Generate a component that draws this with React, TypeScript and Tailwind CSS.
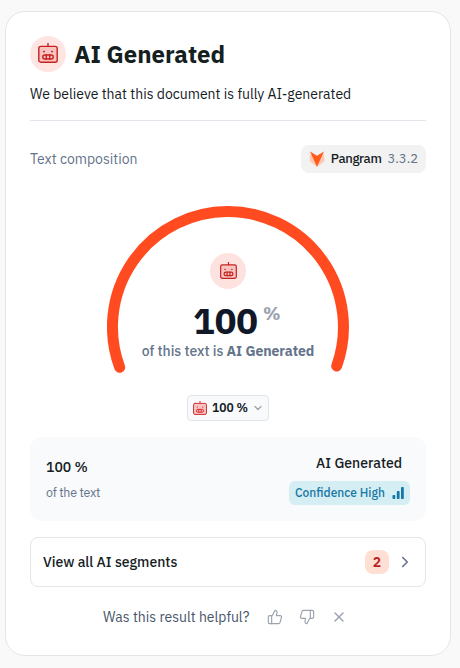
import React from 'react';
import { ChevronDown, ChevronRight, ThumbsDown, ThumbsUp, X } from 'lucide-react';

function RobotIcon({ className }: { className?: string }) {
  return (
    <svg
      viewBox="0 0 20 20"
      fill="none"
      stroke="currentColor"
      strokeWidth="1.4"
      strokeLinecap="round"
      strokeLinejoin="round"
      className={className}
    >
      <path d="M10 0.6V3.4" />
      <rect x="0.8" y="3.4" width="18.4" height="15.8" rx="2" fill="#f8c3c1" />
      <rect x="4.8" y="12" width="10.4" height="4" rx="2" />
      <path d="M8.3 12v4M11.7 12v4" />
      <path d="M5.8 8.6h.4M13.8 8.6h.4" strokeWidth="1.6" />
    </svg>
  );
}

function PangramLogo() {
  return (
    <svg viewBox="0 0 16 16" className="h-4 w-4">
      <path d="M1 3L.6 10.2L8 16L15.4 10.2L15 3L8 6Z" fill="#ffc9b5" />
      <path d="M1 .4L8 4.8L15 .4L8 15.8Z" fill="#ff5c1c" />
    </svg>
  );
}

function Gauge() {
  return (
    <div className="relative mx-auto h-[168px] w-[242px]">
      <svg viewBox="0 0 242 168" className="h-full w-full" fill="none">
        <path
          d="M12.7 161.3A115.5 115.5 0 1 1 229.7 160"
          stroke="#ff4b1f"
          strokeWidth="11"
          strokeLinecap="round"
        />
      </svg>
      <div className="absolute inset-0 flex flex-col items-center pt-[47px]">
        <div className="flex h-9 w-9 items-center justify-center rounded-full bg-[#fee2df]">
          <RobotIcon className="mb-px h-[17px] w-[17px] text-[#c5221f]" />
        </div>
        <div className="mt-3 ml-[17px] flex h-10 items-start gap-[5px]">
          <span className="text-[36px] leading-10 font-bold text-[#111827]">100</span>
          <span className="pt-[3px] text-lg leading-5 font-bold tracking-[-0.5px] text-[#9ca3af]">%</span>
        </div>
        <p className="text-sm leading-5 font-medium tracking-[-0.04px] whitespace-nowrap text-[#64748b]">
          of this text is <span className="font-bold">AI Generated</span>
        </p>
      </div>
    </div>
  );
}

export default function App() {
  return (
    <div className="h-[668px] w-[460px] bg-[#f9f9f9] pt-[11px] pl-[5px] font-['IBM_Plex_Sans',Roboto,sans-serif] text-[#14201e]">
      <div className="h-[645px] w-[446px] rounded-[20px] border border-[#e5e5e5] bg-white p-6">
        <div className="flex h-9 items-center gap-2">
          <div className="flex h-9 w-9 items-center justify-center rounded-full bg-[#fee5e2]">
            <RobotIcon className="mb-0.5 h-5 w-5 text-[#c5221f]" />
          </div>
          <h1 className="text-2xl font-bold">AI Generated</h1>
        </div>
        <p className="mt-3 text-sm leading-5">
          We believe that this document is fully AI-generated
        </p>

        <div className="mt-4 border-t border-[#e2e4ec]" />

        <div className="mt-6 flex h-7 items-center justify-between">
          <span className="text-sm text-[#64748b]">Text composition</span>
          <div className="flex h-7 items-center rounded-lg bg-[#f2f2f2] px-2">
            <PangramLogo />
            <span className="ml-1.5 text-[13px] font-medium tracking-[-0.35px]">Pangram</span>
            <span className="ml-1.5 text-[13px] text-[#64748b]">3.3.2</span>
          </div>
        </div>

        <div className="mt-[33px]">
          <Gauge />
        </div>

        <div className="mt-[21px] flex justify-center">
          <button className="flex h-[26px] w-[82px] items-center rounded border border-[#e2e4e9] bg-[#f9fafb] pl-[5px]">
            <RobotIcon className="mb-px h-3.5 w-3.5 text-[#d32f2f]" />
            <span className="ml-[5px] text-xs font-semibold whitespace-nowrap">100 %</span>
            <ChevronDown className="ml-1 h-3 w-3 text-[#9ca3af]" strokeWidth={2.5} />
          </button>
        </div>

        <div className="mt-4 flex h-[84px] justify-between rounded-xl bg-[#f9fafc] px-4">
          <div className="pt-5">
            <p className="text-sm leading-5 font-medium">100 %</p>
            <p className="mt-[5px] text-[12.5px] leading-5 tracking-[-0.25px] text-[#64748b]">of the text</p>
          </div>
          <div className="flex flex-col items-end pt-4">
            <p className="mr-2 text-sm leading-5 font-medium">AI Generated</p>
            <div className="mt-2 flex h-6 w-[121px] items-center justify-between rounded-md bg-[#d5eef3] pr-1.5 pl-1.5 text-[#1878a5]">
              <span className="text-xs font-medium">Confidence High</span>
              <svg viewBox="0 0 12 12" className="h-3 w-3" fill="currentColor">
                <rect x="0.5" y="8" width="2.8" height="4" rx="0.8" />
                <rect x="4.8" y="4" width="2.8" height="8" rx="0.8" />
                <rect x="9" y="0" width="2.8" height="12" rx="0.8" />
              </svg>
            </div>
          </div>
        </div>

        <button className="mt-4 flex h-[50px] w-full items-center rounded-lg border border-[#e5e5e5] bg-white pr-[11px] pl-3">
          <span className="text-sm font-medium">View all AI segments</span>
          <span className="ml-auto flex h-6 w-6 items-center justify-center rounded-lg bg-[#ffdfd3] text-sm font-semibold text-[#b91c1c]">
            2
          </span>
          <ChevronRight className="ml-[7px] h-[18px] w-[18px] text-[#64748b]" strokeWidth={2.2} />
        </button>

        <div className="mt-5 flex h-5 items-center pl-[73px]">
          <span className="text-sm text-[#475569]">Was this result helpful?</span>
          <ThumbsUp className="ml-[18px] h-4 w-4 text-[#9ca3af]" strokeWidth={1.75} />
          <ThumbsDown className="ml-4 h-4 w-4 text-[#9ca3af]" strokeWidth={1.75} />
          <X className="ml-4 h-4 w-4 text-[#9ca3af]" strokeWidth={2} />
        </div>
      </div>
    </div>
  );
}
